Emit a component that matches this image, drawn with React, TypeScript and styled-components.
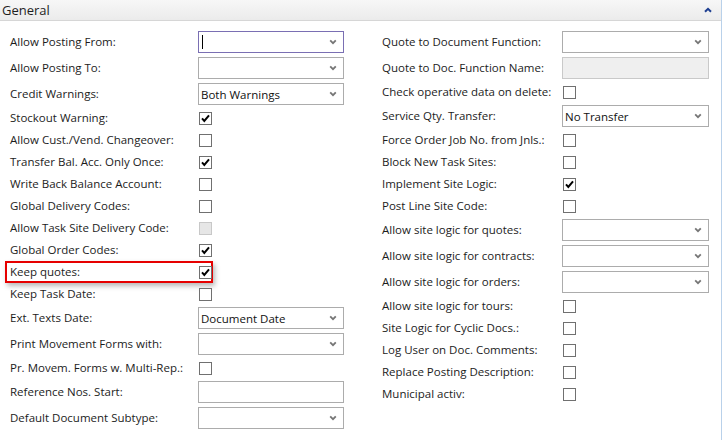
import React from "react";
import styled, { createGlobalStyle, css } from "styled-components";

const Global = createGlobalStyle`
  html, body { margin: 0; padding: 0; background: #fff; }
  body { font-family: "Open Sans", "Noto Sans", Arial, sans-serif; }
`;

const Page = styled.div`
  width: 721px;
  height: 440px;
  border-right: 1px solid #b9d1ea;
  background: #fff;
  overflow: hidden;
  box-sizing: content-box;
`;

const Header = styled.div`
  height: 20px;
  border-bottom: 1px solid #d6d6d6;
  background: linear-gradient(#f7f7f7, #ebebeb);
  display: flex;
  align-items: center;
  justify-content: space-between;
  padding: 0 9px 0 2px;
`;

const Title = styled.span`
  font-size: 13px;
  color: #1e1e1e;
  line-height: 20px;
`;

const Body = styled.div`
  display: grid;
  grid-template-columns: 372px 1fr;
  padding: 8px 0 0 10px;
`;

const Column = styled.div`
  display: flex;
  flex-direction: column;
`;

const Row = styled.div<{ $label: number; $ctl: number; $tall?: boolean; $hl?: boolean }>`
  position: relative;
  display: grid;
  grid-template-columns: ${(p) => p.$label}px ${(p) => p.$ctl}px;
  align-items: center;
  height: ${(p) => (p.$tall ? 26 : 22)}px;
  ${(p) =>
    p.$hl &&
    css`
      &::before {
        content: "";
        position: absolute;
        left: -5px;
        top: 0px;
        width: 204px;
        height: 18px;
        border: 2px solid #e60000;
        background: #fff;
        box-shadow: 2px 3px 5px rgba(0, 0, 0, 0.28);
        z-index: 0;
      }
      & > * { position: relative; z-index: 1; }
    `}
`;

const Label = styled.span`
  font-size: 11.5px;
  color: #1c1c1c;
  white-space: nowrap;
  line-height: 16px;
`;

const Field = styled.div<{ $focus?: boolean; $disabled?: boolean }>`
  height: 22px;
  box-sizing: border-box;
  border: 1px solid ${(p) => (p.$focus ? "#7a6fb3" : p.$disabled ? "#c9c9c9" : "#acacac")};
  background: ${(p) => (p.$disabled ? "#efefef" : "#fff")};
  display: flex;
  align-items: center;
  justify-content: space-between;
  padding: 0 6px 0 2px;
  font-size: 11.5px;
  color: #111;
`;

const Caret = styled.span`
  width: 1px;
  height: 14px;
  background: #000;
  margin-left: 1px;
`;

const Box = styled.div<{ $disabled?: boolean }>`
  width: 13px;
  height: 13px;
  box-sizing: border-box;
  border: 1px solid ${(p) => (p.$disabled ? "#c8c8c8" : "#707070")};
  background: ${(p) => (p.$disabled ? "#e6e6e6" : "#fff")};
  display: flex;
  align-items: center;
  justify-content: center;
  margin-left: 1px;
`;

const Chevron = () => (
  <svg width="8" height="6" viewBox="0 0 8 6">
    <path d="M1.2 1.4 L4 4.2 L6.8 1.4" fill="none" stroke="#767676" strokeWidth="1.8" />
  </svg>
);

const Check = () => (
  <svg width="9" height="9" viewBox="0 0 9 9">
    <path d="M1 4.4 L3.3 6.9 L8 1.4" fill="none" stroke="#000" strokeWidth="2" />
  </svg>
);

const UpArrow = () => (
  <svg width="8" height="6" viewBox="0 0 8 6">
    <path d="M1 4.8 L4 1.8 L7 4.8" fill="none" stroke="#1e3f91" strokeWidth="2" />
  </svg>
);

type Item =
  | { t: "select"; label: string; value?: string; focus?: boolean }
  | { t: "text"; label: string; disabled?: boolean }
  | { t: "check"; label: string; checked?: boolean; disabled?: boolean; hl?: boolean };

const left: Item[] = [
  { t: "select", label: "Allow Posting From:", focus: true },
  { t: "select", label: "Allow Posting To:" },
  { t: "select", label: "Credit Warnings:", value: "Both Warnings" },
  { t: "check", label: "Stockout Warning:", checked: true },
  { t: "check", label: "Allow Cust./Vend. Changeover:" },
  { t: "check", label: "Transfer Bal. Acc. Only Once:", checked: true },
  { t: "check", label: "Write Back Balance Account:" },
  { t: "check", label: "Global Delivery Codes:" },
  { t: "check", label: "Allow Task Site Delivery Code:", disabled: true },
  { t: "check", label: "Global Order Codes:", checked: true },
  { t: "check", label: "Keep quotes:", checked: true, hl: true },
  { t: "check", label: "Keep Task Date:" },
  { t: "select", label: "Ext. Texts Date:", value: "Document Date" },
  { t: "select", label: "Print Movement Forms with:" },
  { t: "check", label: "Pr. Movem. Forms w. Multi-Rep.:" },
  { t: "text", label: "Reference Nos. Start:" },
  { t: "select", label: "Default Document Subtype:" },
];

const right: Item[] = [
  { t: "select", label: "Quote to Document Function:" },
  { t: "text", label: "Quote to Doc. Function Name:", disabled: true },
  { t: "check", label: "Check operative data on delete:" },
  { t: "select", label: "Service Qty. Transfer:", value: "No Transfer" },
  { t: "check", label: "Force Order Job No. from Jnls.:" },
  { t: "check", label: "Block New Task Sites:" },
  { t: "check", label: "Implement Site Logic:", checked: true },
  { t: "check", label: "Post Line Site Code:" },
  { t: "select", label: "Allow site logic for quotes:" },
  { t: "select", label: "Allow site logic for contracts:" },
  { t: "select", label: "Allow site logic for orders:" },
  { t: "check", label: "Allow site logic for tours:" },
  { t: "check", label: "Site Logic for Cyclic Docs.:" },
  { t: "check", label: "Log User on Doc. Comments:" },
  { t: "check", label: "Replace Posting Description:" },
  { t: "check", label: "Municipal activ:" },
];

const renderItems = (items: Item[], lw: number, cw: number) =>
  items.map((it) => {
    if (it.t === "check") {
      return (
        <Row key={it.label} $label={lw} $ctl={cw} $hl={it.hl}>
          <Label>{it.label}</Label>
          <Box $disabled={it.disabled}>{it.checked && <Check />}</Box>
        </Row>
      );
    }
    return (
      <Row key={it.label} $label={lw} $ctl={cw} $tall>
        <Label>{it.label}</Label>
        {it.t === "select" ? (
          <Field $focus={it.focus}>
            {it.focus ? <Caret /> : <span>{it.value ?? ""}</span>}
            <Chevron />
          </Field>
        ) : (
          <Field $disabled={it.disabled} />
        )}
      </Row>
    );
  });

export default function App() {
  return (
    <>
      <Global />
      <Page>
        <Header>
          <Title>General</Title>
          <UpArrow />
        </Header>
        <Body>
          <Column>{renderItems(left, 188, 146)}</Column>
          <Column>{renderItems(right, 180, 147)}</Column>
        </Body>
      </Page>
    </>
  );
}
